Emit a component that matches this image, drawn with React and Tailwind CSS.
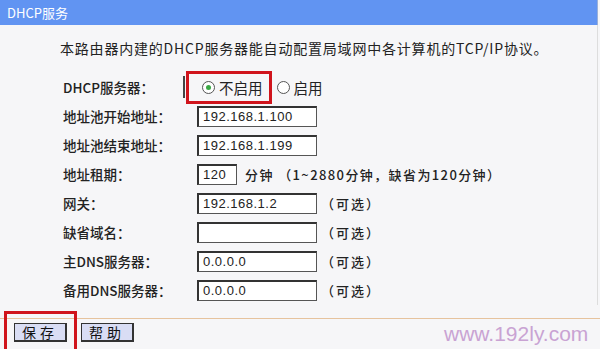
const font = "font-['SimSun','Noto_Sans_CJK_SC',sans-serif]";

const Field = ({ value, w = "w-[120px]" }) => (
  <div
    className={`flex h-[21px] ${w} items-center border border-t-2 border-l-2 border-[#555] border-t-[#333] border-l-[#333] bg-white px-[4px] font-['Liberation_Sans',sans-serif] text-[13px] tracking-[0.5px] text-[#222]`}
  >
    {value}
  </div>
);

const Row = ({ label, children }) => (
  <div className="flex h-[29px] items-center">
    <div className="w-[134px] text-[13.5px] font-medium text-[#222]">{label}</div>
    <div className="flex items-center">{children}</div>
  </div>
);

const Optional = () => (
  <span className="ml-[4px] text-[13px] font-medium tracking-[2px] text-[#222]">（可选）</span>
);

const Radio = ({ checked }) => (
  <span className="inline-flex h-[13px] w-[13px] items-center justify-center rounded-full border border-[#555] bg-white">
    {checked && <span className="h-[5px] w-[5px] rounded-full bg-[#3aa845]" />}
  </span>
);

const Button = ({ children }) => (
  <button className="flex h-[19px] w-[53px] items-center justify-center border border-[#333] border-r-2 border-b-2 bg-[#d9ddf4] text-[14px] tracking-[4px] text-[#111]">
    {children}
  </button>
);

export default function App() {
  return (
    <div className={`relative h-[349px] w-[600px] overflow-hidden bg-[#f6f6f8] ${font}`}>
      <div className="flex h-[25px] w-[598px] items-center border-r border-[#9ab0d8] bg-[#6194f2] pl-[7px] text-[13px] text-white">
        DHCP服务
      </div>
      <div className="w-[598px] border-r border-[#ddd]">
        <p className="pl-[60px] pt-[14px] text-[14px] leading-[18px] tracking-[0.8px] text-[#222]">
          本路由器内建的DHCP服务器能自动配置局域网中各计算机的TCP/IP协议。
        </p>
        <div className="pl-[63px] pt-[16px]">
          <Row label="DHCP服务器：">
            <div className="ml-[5px] flex items-center gap-[4px] text-[14.5px] text-[#222]">
              <Radio checked />
              <span>不启用</span>
              <span className="ml-[6px]" />
              <Radio />
              <span>启用</span>
            </div>
          </Row>
          <Row label="地址池开始地址：">
            <Field value="192.168.1.100" />
          </Row>
          <Row label="地址池结束地址：">
            <Field value="192.168.1.199" />
          </Row>
          <Row label="地址租期：">
            <Field value="120" w="w-[40px]" />
            <span className="ml-[8px] text-[13px] font-medium tracking-[1.4px] text-[#222]">
              分钟 （1~2880分钟，缺省为120分钟）
            </span>
          </Row>
          <Row label="网关：">
            <Field value="192.168.1.2" />
            <Optional />
          </Row>
          <Row label="缺省域名：">
            <Field value="" />
            <Optional />
          </Row>
          <Row label="主DNS服务器：">
            <Field value="0.0.0.0" />
            <Optional />
          </Row>
          <Row label="备用DNS服务器：">
            <Field value="0.0.0.0" />
            <Optional />
          </Row>
        </div>
      </div>
      <div className="mt-[13px] h-[1px] w-full bg-[#e6c39e]" />
      <div className="flex gap-[14px] pl-[14px] pt-[4px]">
        <Button>保存</Button>
        <Button>帮助</Button>
      </div>

      <div className="absolute left-[183px] top-[76px] h-[22px] w-[2px] bg-[#444]" />
      <div className="absolute left-[186px] top-[71px] h-[33px] w-[86px] border-[3px] border-[#d0141c]" />
      <div className="absolute left-[4px] top-[311px] h-[42px] w-[73px] border-[3px] border-[#d0141c]" />
      <div className="absolute left-[444px] top-[318px] font-['Liberation_Sans',sans-serif] text-[21px] text-[#c9a3d3]">
        www.192ly.com
      </div>
    </div>
  );
}
